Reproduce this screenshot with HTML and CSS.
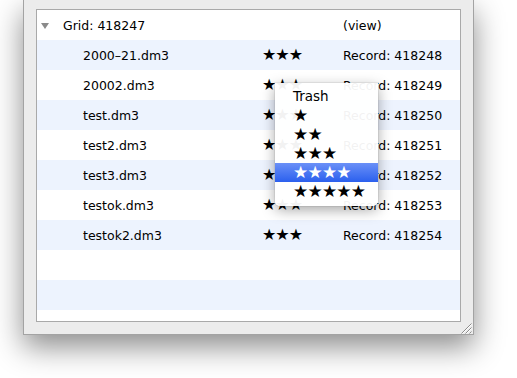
FILE: index.html
```html
<!DOCTYPE html>
<html lang="en">
<head>
    <meta charset="UTF-8">
    <title>Grid records</title>
    <link rel="stylesheet" href="styles.css">
</head>
<body>
    <div class="window">
        <div class="table">
            <div class="row group">
                <div class="cell name"><span class="disclosure"></span>Grid: 418247</div>
                <div class="cell stars"></div>
                <div class="cell record">(view)</div>
            </div>
            <div class="row alt">
                <div class="cell name">2000&ndash;21.dm3</div>
                <div class="cell stars">&#9733;&#9733;&#9733;</div>
                <div class="cell record">Record: 418248</div>
            </div>
            <div class="row">
                <div class="cell name">20002.dm3</div>
                <div class="cell stars">&#9733;&#9733;&#9733;</div>
                <div class="cell record">Record: 418249</div>
            </div>
            <div class="row alt">
                <div class="cell name">test.dm3</div>
                <div class="cell stars">&#9733;&#9733;&#9733;</div>
                <div class="cell record">Record: 418250</div>
            </div>
            <div class="row">
                <div class="cell name">test2.dm3</div>
                <div class="cell stars">&#9733;&#9733;&#9733;</div>
                <div class="cell record">Record: 418251</div>
            </div>
            <div class="row alt">
                <div class="cell name">test3.dm3</div>
                <div class="cell stars">&#9733;&#9733;&#9733;</div>
                <div class="cell record">Record: 418252</div>
            </div>
            <div class="row">
                <div class="cell name">testok.dm3</div>
                <div class="cell stars">&#9733;&#9733;&#9733;</div>
                <div class="cell record">Record: 418253</div>
            </div>
            <div class="row alt">
                <div class="cell name">testok2.dm3</div>
                <div class="cell stars">&#9733;&#9733;&#9733;</div>
                <div class="cell record">Record: 418254</div>
            </div>
            <div class="row"></div>
            <div class="row alt"></div>

            <ul class="menu">
                <li>Trash</li>
                <li class="star-item">&#9733;</li>
                <li class="star-item">&#9733;&#9733;</li>
                <li class="star-item">&#9733;&#9733;&#9733;</li>
                <li class="star-item selected">&#9733;&#9733;&#9733;&#9733;</li>
                <li class="star-item">&#9733;&#9733;&#9733;&#9733;&#9733;</li>
            </ul>
        </div>
        <div class="footer">
            <svg class="grip" width="12" height="12" viewBox="0 0 12 12">
                <path d="M11.5 1.5 L1.5 11.5 M11.5 5.5 L5.5 11.5 M11.5 9.5 L9.5 11.5" stroke="#8c8c8c" stroke-width="1" fill="none"/>
                <path d="M11.5 2.5 L2.5 11.5 M11.5 6.5 L6.5 11.5" stroke="#ffffff" stroke-width="1" fill="none"/>
            </svg>
        </div>
    </div>
</body>
</html>
```

FILE: styles.css
```css
body {
    margin: 0;
    padding: 0;
    background-color: #ffffff;
    font-family: "DejaVu Sans", sans-serif;
    font-size: 12.5px;
    color: #000000;
    width: 517px;
    height: 378px;
    overflow: hidden;
}

.window {
    margin-left: 23px;
    width: 451px;
    height: 335px;
    background-color: #ececec;
    border: 1px solid #a3a3a3;
    border-top: none;
    box-shadow: 0 12px 28px rgba(0, 0, 0, 0.45);
    padding-top: 9px;
    box-sizing: border-box;
}

.table {
    position: relative;
    margin-left: 12px;
    width: 425px;
    height: 313px;
    border: 1px solid #a9a9a9;
    box-sizing: border-box;
    background-color: #ffffff;
    overflow: hidden;
}

.row {
    display: grid;
    grid-template-columns: 225px 81px 1fr;
    align-items: center;
    height: 30px;
}

.row.alt {
    background-color: #edf3fe;
}

.cell {
    white-space: nowrap;
}

.name {
    padding-left: 46px;
}

.group .name {
    padding-left: 4px;
    display: flex;
    align-items: center;
}

.disclosure {
    width: 0;
    height: 0;
    border-left: 4px solid transparent;
    border-right: 4px solid transparent;
    border-top: 6px solid #8a8a8a;
    margin-right: 14px;
    margin-top: 1px;
}

.stars {
    font-size: 16px;
    letter-spacing: -1px;
    line-height: 16px;
}

.menu {
    position: absolute;
    left: 238px;
    top: 73px;
    width: 103px;
    margin: 0;
    padding: 4px 0 5px;
    list-style: none;
    background-color: rgba(255, 255, 255, 0.95);
    border-radius: 0 0 5px 5px;
    box-shadow: 0 4px 14px rgba(0, 0, 0, 0.35), 0 0 0 1px rgba(0, 0, 0, 0.06);
    font-size: 13.5px;
}

.menu li {
    height: 19px;
    line-height: 19px;
    padding-left: 18px;
}

.menu .star-item {
    font-size: 17px;
    letter-spacing: -0.8px;
}

.menu .selected {
    background: linear-gradient(#6a90f7, #2b60ee);
    color: #ffffff;
}

.footer {
    display: flex;
    justify-content: flex-end;
    height: 13px;
    padding-right: 1px;
}
```
